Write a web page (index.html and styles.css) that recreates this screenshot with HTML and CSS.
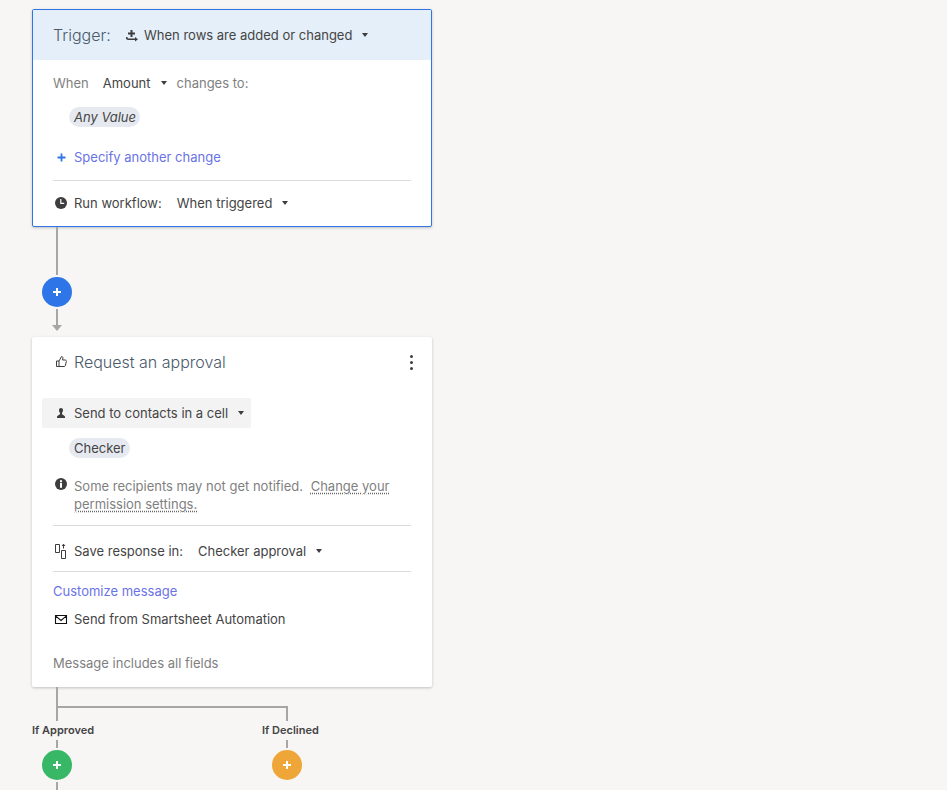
FILE: index.html
```html
<!DOCTYPE html>
<html lang="en">
<head>
<meta charset="utf-8">
<title>Workflow</title>
<link rel="stylesheet" href="styles.css">
</head>
<body>
<main class="canvas">
  <section class="card card-trigger">
    <header class="trigger-head">
      <span class="trigger-label">Trigger:</span>
      <svg class="icon-trigger" width="12" height="12" viewBox="0 0 12 12"><path d="M4.500 1h2v2.500H9v2H6.500V8h-2V5.500H2v-2h2.500z" fill="#3d3d3d"/><path d="M0 8h1.500v.6c0 .6.3.9.9.9H9V8l3 2.250L9 12.500V11H2.200C.9 11 0 10.200 0 9z" fill="#3d3d3d"/></svg>
      <span class="value">When rows are added or changed</span>
      <i class="caret caret-head"></i>
    </header>
    <div class="when-row">
      <span class="muted">When</span>
      <span class="value when-col">Amount</span>
      <i class="caret caret-when"></i>
      <span class="muted">changes to:</span>
    </div>
    <div class="chip-row chip-row-any"><span class="chip chip-any">Any Value</span></div>
    <div class="add-row">
      <svg class="icon-plus" width="9" height="9" viewBox="0 0 9 9"><path d="M3.600 .5h1.800v3.100h3.100v1.800H5.400v3.100H3.600V5.400H.5V3.600h3.100z" fill="#2e75e8"/></svg>
      <a class="link">Specify another change</a>
    </div>
    <hr class="rule rule-trigger">
    <div class="icon-row run-row">
      <svg class="icon" width="14" height="14" viewBox="0 0 14 14"><circle cx="7" cy="7" r="6" fill="#3d3d3d"/><path d="M6.800 3v4.300h3.400" fill="none" stroke="#fff" stroke-width="1.200"/></svg>
      <span class="value">Run workflow:</span>
      <span class="value run-val">When triggered</span>
      <i class="caret caret-run"></i>
    </div>
  </section>

  <div class="stem stem-top"></div>
  <button class="add add-blue"><svg width="8" height="8" viewBox="0 0 8 8"><path d="M3 0h2v3h3v2H5v3H3V5H0V3h3z" fill="#fff"/></svg></button>
  <div class="stem stem-arrow"></div>
  <i class="arrow"></i>

  <section class="card card-approval">
    <header class="approval-head">
      <svg class="icon-thumb" width="14" height="14" viewBox="0 0 14 14"><path d="M5 7H2.500v5.500H5zM5 7 7.500 2.500c1 0 1.500.7 1.400 1.600L8.600 6h2.500c.9 0 1.400.6 1.200 1.500l-.9 4c-.2.7-.6 1-1.300 1H5" fill="none" stroke="#3d3d3d" stroke-width="1"/></svg>
      <h2 class="approval-title">Request an approval</h2>
      <span class="kebab"><i></i><i></i><i></i></span>
    </header>
    <div class="select-box">
      <svg class="icon" width="14" height="14" viewBox="0 0 14 14"><path d="M6 2c1.200 0 2 .9 2 2.200 0 1-.4 2-1 2.500v1.300c0 .5 2.300 1.200 3 2.500V12H2v-1.500c.7-1.300 3-2 3-2.500V6.700c-.6-.5-1-1.500-1-2.500C4 2.900 4.800 2 6 2z" fill="#3d3d3d"/></svg>
      <span class="value">Send to contacts in a cell</span>
      <i class="caret caret-select"></i>
    </div>
    <div class="chip-row chip-row-check"><span class="chip">Checker</span></div>
    <div class="notice">
      <svg class="icon icon-info" width="14" height="14" viewBox="0 0 14 14"><circle cx="7" cy="7" r="6" fill="#3d3d3d"/><rect x="6" y="6" width="2" height="4.800" fill="#fff"/><rect x="6" y="3.200" width="2" height="2" fill="#fff"/></svg>
      <p class="notice-text">Some recipients may not get notified. <a class="dotted dotted-first">Change your</a> <a class="dotted">permission settings.</a></p>
    </div>
    <hr class="rule rule-notice">
    <div class="icon-row save-row">
      <svg class="icon" width="14" height="16" viewBox="0 0 14 16"><path d="M1.500 1.500h4v8h-4zM7.500 7.500h4v8h-4z" fill="none" stroke="#3d3d3d" stroke-width="1"/><path d="M9.500 5.500V1.500M8 3l1.500-1.800L11 3" fill="none" stroke="#3d3d3d" stroke-width="1"/></svg>
      <span class="value">Save response in:</span>
      <span class="value save-val">Checker approval</span>
      <i class="caret caret-save"></i>
    </div>
    <hr class="rule rule-save">
    <a class="link customize">Customize message</a>
    <div class="icon-row mail-row">
      <svg class="icon" width="14" height="14" viewBox="0 0 14 14"><path d="M1.500 3.500h11v8h-11zM1.500 3.800l5.500 4.700 5.500-4.700" fill="none" stroke="#111" stroke-width="1.100"/></svg>
      <span class="value">Send from Smartsheet Automation</span>
    </div>
    <p class="muted includes">Message includes all fields</p>
  </section>

  <div class="stem stem-split"></div>
  <div class="split-bar"></div>
  <div class="branches">
    <div class="branch">
      <div class="stem stem-branch"></div>
      <span class="branch-label">If Approved</span>
      <div class="stem stem-dash"></div>
      <button class="add add-green"><svg width="8" height="8" viewBox="0 0 8 8"><path d="M3 0h2v3h3v2H5v3H3V5H0V3h3z" fill="#fff"/></svg></button>
      <div class="stem stem-tail"></div>
    </div>
    <div class="branch">
      <div class="stem stem-branch"></div>
      <span class="branch-label">If Declined</span>
      <div class="stem stem-dash"></div>
      <button class="add add-orange"><svg width="8" height="8" viewBox="0 0 8 8"><path d="M3 0h2v3h3v2H5v3H3V5H0V3h3z" fill="#fff"/></svg></button>
    </div>
  </div>
</main>
</body>
</html>
```

FILE: styles.css
```css
* { box-sizing: border-box; }
html, body { margin: 0; padding: 0; background: #fff; }
body { font-family: Inter, "Liberation Sans", sans-serif; font-size: 13px; line-height: 18px; color: #444; }

.canvas { height: 790px; overflow: hidden; background: #f7f6f5; padding: 9px 0 0 32px; display: flex; flex-direction: column; align-items: flex-start; }

.card { flex: none; width: 400px; background: #fff; border-radius: 2px; box-shadow: 0 1px 3px rgba(0, 0, 0, .22); }
.card-trigger { height: 218px; border: 1px solid #2e75e8; }
.card-approval { height: 350px; }

.trigger-head { height: 50px; background: #e4eff9; display: flex; align-items: center; padding-left: 20px; }
.trigger-label { font-size: 16px; font-weight: 300; color: #4a5a6a; width: 72px; }
.icon-trigger { margin: 0 6px 0 1px; display: block; overflow: visible; }
.value { color: #444; white-space: nowrap; }
.muted { color: #7f7f7f; white-space: nowrap; }
.link { color: #6a73e6; }

.caret { display: block; width: 0; height: 0; border-left: 3px solid transparent; border-right: 3px solid transparent; border-top: 4px solid #3d3d3d; }
.caret-head { margin-left: 10px; }
.caret-when { margin: 0 10px 0 10px; }
.caret-run { margin-left: 10px; }
.caret-select { margin-left: 10px; }
.caret-save { margin-left: 10px; }

.when-row { display: flex; align-items: center; padding: 14px 0 0 20px; height: 32px; }
.when-col { margin-left: 14px; }
.chip-row { display: flex; }
.chip-row-any { padding: 15px 0 0 36px; }
.chip { display: block; height: 20px; line-height: 20px; padding: 0 4px 0 5px; border-radius: 10px; background: #e6eaf0; color: #444; }
.chip-any { font-style: italic; }
.add-row { display: flex; align-items: center; padding: 21px 0 0 24px; }
.icon-plus { margin-right: 8px; display: block; }
.rule { border: 0; border-top: 1px solid #dcdcdc; margin: 0 0 0 20px; width: 358px; height: 0; }
.rule-trigger { margin-top: 14px; }
.icon-row { display: flex; align-items: center; }
.icon { display: block; flex: none; }
.run-row { padding: 13px 0 0 21px; }
.run-row .icon { margin-right: 6px; }
.run-val { margin-left: 15px; }

.stem { width: 2px; background: #a6a6a6; flex: none; margin-left: 24px; }
.stem-top { height: 48px; }
.add { display: flex; align-items: center; justify-content: center; width: 30px; height: 30px; padding: 0; border: 0; border-radius: 50%; margin: 2px 0 2px 10px; flex: none; }
.add svg { display: block; }
.add-blue { background: #2e75e8; }
.add-green { background: #38b866; }
.add-orange { background: #efa638; }
.stem-arrow { height: 17px; }
.arrow { display: block; flex: none; margin: -1px 0 6px 20px; width: 0; height: 0; border-left: 5px solid transparent; border-right: 5px solid transparent; border-top: 6px solid #a6a6a6; }

.approval-head { display: flex; align-items: center; height: 51px; padding: 0 0 0 22px; }
.icon-thumb { display: block; margin: -3px 6px 0 0; }
.approval-title { margin: 0; font-size: 16px; font-weight: 300; color: #4a5a6a; line-height: 51px; flex: 1; }
.kebab { display: flex; flex-direction: column; gap: 3px; margin-right: 19px; }
.kebab i { display: block; width: 3px; height: 3px; border-radius: 50%; background: #3d3d3d; }

.select-box { display: flex; align-items: center; width: 209px; height: 30px; margin: 10px 0 0 10px; padding-left: 13px; background: #f3f3f3; border-radius: 2px; }
.select-box .icon { margin-right: 5px; }
.chip-row-check { padding: 11px 0 0 37px; margin-top: -1px; }

.notice { display: flex; align-items: flex-start; padding: 19px 0 0 22px; }
.icon-info { margin: 0 6px 0 0; }
.notice-text { margin: 0; color: #7f7f7f; width: 330px; }
.dotted { text-decoration: underline dotted #666; text-underline-offset: 2px; color: #7f7f7f; }
.dotted-first { margin-left: 4px; }
.rule-notice { margin: 12px 0 0 21px; }
.save-row { padding: 16px 0 0 22px; }
.save-row .icon { margin-right: 6px; }
.save-val { margin-left: 15px; }
.rule-save { margin: 11px 0 0 21px; }
.customize { display: block; margin: 10px 0 0 21px; }
.mail-row { padding: 10px 0 0 22px; }
.mail-row .icon { margin-right: 6px; }
.includes { margin: 26px 0 0 21px; }

.stem-split { height: 19px; }
.split-bar { flex: none; width: 232px; height: 2px; margin-left: 24px; background: #a6a6a6; }
.branches { display: flex; flex: none; }
.branch { width: 230px; display: flex; flex-direction: column; align-items: flex-start; }
.stem-branch { height: 13px; }
.branch-label { font-size: 11px; font-weight: 600; line-height: 18px; height: 19px; color: #444; white-space: nowrap; }
.stem-dash { height: 8px; }
.stem-tail { height: 10px; }
```
